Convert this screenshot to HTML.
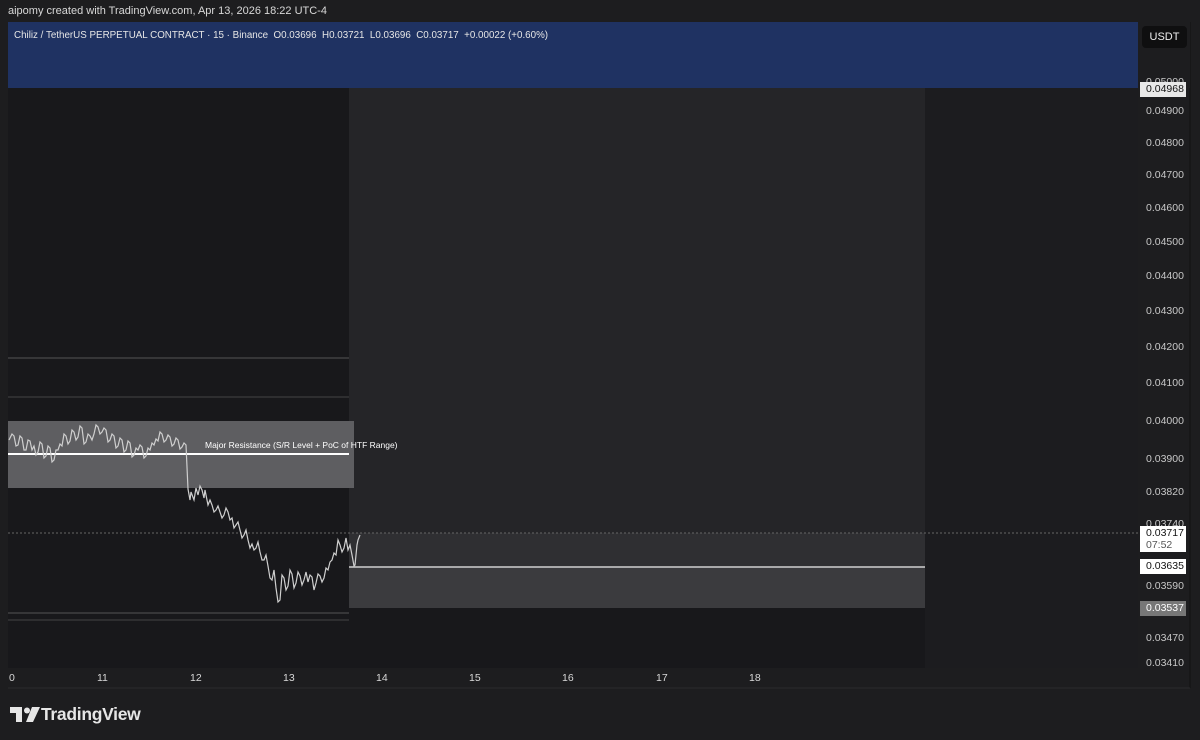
<!DOCTYPE html>
<html><head><meta charset="utf-8"><style>
body{margin:0;width:1200px;height:740px;background:#1d1d1f;overflow:hidden;font-family:"Liberation Sans",sans-serif;position:relative}
.t{position:absolute;color:#d8d8d8;font-size:11px;white-space:nowrap}
.p{position:absolute;left:1146px;color:#c8c8c8;font-size:10.5px}
.lab{position:absolute;left:1140px;width:46px;background:#fff;color:#111;font-size:10.5px;padding-left:6px;box-sizing:border-box}
</style></head><body>
<div class="t" style="left:8px;top:5px;font-size:11px">aipomy created with TradingView.com, Apr 13, 2026 18:22 UTC-4</div>
<svg style="position:absolute;left:0;top:0" width="1200" height="740">
<rect x="8" y="22" width="1130" height="646" fill="#18181b"/>
<rect x="925" y="88" width="213" height="580" fill="#1c1c1f"/>
<rect x="349" y="88" width="576" height="520" fill="#252528"/>
<rect x="349" y="533" width="576" height="34" fill="#2f2f32"/>
<rect x="349" y="567" width="576" height="41" fill="#3b3b3e"/>
<line x1="349" y1="567" x2="925" y2="567" stroke="#d0d0d0" stroke-width="1.5"/>
<rect x="8" y="421" width="346" height="67" fill="#5e5e61"/>
<line x1="8" y1="454" x2="349" y2="454" stroke="#fff" stroke-width="2"/>
<line x1="8" y1="358" x2="349" y2="358" stroke="#555" stroke-width="1"/>
<line x1="8" y1="397" x2="349" y2="397" stroke="#444" stroke-width="1"/>
<line x1="8" y1="613" x2="349" y2="613" stroke="#555" stroke-width="1"/>
<line x1="8" y1="620" x2="349" y2="620" stroke="#444" stroke-width="1"/>
<line x1="8" y1="533" x2="1138" y2="533" stroke="#666" stroke-dasharray="2 2" stroke-width="1"/>
<polyline fill="none" stroke="#cfcfcf" stroke-width="1.2" points="9,440 12,434 14,436 16,446 18,445 20,436 22,438 24,450 26,450 28,440 30,441 32,450 34,446 36,455 38,452 40,442 42,444 44,458 46,456 48,446 50,448 52,462 54,460 56,450 58,450 60,444 62,446 64,434 66,436 68,444 70,441 72,430 74,432 76,440 78,437 80,426 82,428 84,444 86,442 88,434 90,436 92,440 94,434 96,425 98,427 100,434 102,432 104,428 106,430 108,442 110,440 112,434 114,436 116,448 118,446 120,438 122,440 124,452 126,450 128,441 130,443 132,457 134,455 136,448 138,450 140,445 142,447 144,458 146,456 148,448 150,450 152,443 154,445 156,439 158,441 160,432 162,434 164,442 166,440 168,435 170,437 172,446 174,444 176,438 178,440 180,449 182,447 184,443 186,445 188,489 190,500 191,492 194,500 196,488 198,495 200,486 202,490 204,498 205,490 208,505 210,500 212,505 214,512 216,510 218,506 220,512 222,518 224,515 226,508 228,512 230,520 232,518 234,528 236,525 238,522 240,530 242,538 244,535 246,530 248,540 250,548 252,544 254,550 256,548 258,542 260,552 262,560 264,560 266,555 268,566 270,578 272,580 274,570 276,588 278,602 280,600 282,575 284,578 286,590 288,586 290,570 292,574 294,588 296,583 298,572 300,576 302,585 304,580 306,572 308,582 310,575 312,577 314,590 316,583 318,574 320,576 322,582 324,578 326,568 328,570 330,562 332,560 334,553 336,555 338,540 340,545 342,552 344,548 346,538 348,550 350,545 352,555 354,566 355,565 357,545 358,540 360,535"/>
<line x1="1190" y1="22" x2="1190" y2="688" stroke="#111" stroke-width="1"/>
<line x1="8" y1="688" x2="1190" y2="688" stroke="#2a2a2c" stroke-width="1"/>
</svg>
<div style="position:absolute;left:8px;top:22px;width:1130px;height:66px;background:#1f3262"></div>
<div style="position:absolute;left:1138px;top:22px;width:52px;height:66px;background:#1d1d1f"></div>
<div class="t" style="left:14px;top:30px;font-size:9.8px;color:#e6e6e6">Chiliz / TetherUS PERPETUAL CONTRACT · 15 · Binance&nbsp; O0.03696&nbsp; H0.03721&nbsp; L0.03696&nbsp; C0.03717&nbsp; +0.00022 (+0.60%)</div>
<div class="t" style="left:205px;top:440px;font-size:8.5px;color:#fff">Major Resistance (S/R Level + PoC of HTF Range)</div>
<div style="position:absolute;left:1142px;top:26px;width:45px;height:22px;background:#0f0f10;border-radius:4px;color:#eee;font-size:11px;line-height:22px;text-align:center">USDT</div>
<div class="p" style="top:76px">0.05000</div>
<div class="lab" style="top:82px;height:15px;line-height:15px;background:#e8e8e8">0.04968</div>
<div class="p" style="top:105px">0.04900</div>
<div class="p" style="top:137px">0.04800</div>
<div class="p" style="top:169px">0.04700</div>
<div class="p" style="top:202px">0.04600</div>
<div class="p" style="top:236px">0.04500</div>
<div class="p" style="top:270px">0.04400</div>
<div class="p" style="top:305px">0.04300</div>
<div class="p" style="top:341px">0.04200</div>
<div class="p" style="top:377px">0.04100</div>
<div class="p" style="top:415px">0.04000</div>
<div class="p" style="top:453px">0.03900</div>
<div class="p" style="top:486px">0.03820</div>
<div class="p" style="top:518px">0.03740</div>
<div class="lab" style="top:526px;height:26px;line-height:12px;padding-top:1px">0.03717<br><span style="color:#555">07:52</span></div>
<div class="lab" style="top:559px;height:15px;line-height:15px">0.03635</div>
<div class="p" style="top:580px">0.03590</div>
<div class="lab" style="top:601px;height:15px;line-height:15px;background:#777;color:#fff">0.03537</div>
<div class="p" style="top:632px">0.03470</div>
<div class="p" style="top:657px">0.03410</div>
<div class="t" style="left:9px;top:672px;font-size:10.5px">0</div>
<div class="t" style="left:97px;top:672px;font-size:10.5px">11</div>
<div class="t" style="left:190px;top:672px;font-size:10.5px">12</div>
<div class="t" style="left:283px;top:672px;font-size:10.5px">13</div>
<div class="t" style="left:376px;top:672px;font-size:10.5px">14</div>
<div class="t" style="left:469px;top:672px;font-size:10.5px">15</div>
<div class="t" style="left:562px;top:672px;font-size:10.5px">16</div>
<div class="t" style="left:656px;top:672px;font-size:10.5px">17</div>
<div class="t" style="left:749px;top:672px;font-size:10.5px">18</div>
<svg style="position:absolute;left:10px;top:707px" width="30" height="16"><path d="M0 0H12V15H6V6H0Z" fill="#e6e6e6"/><circle cx="17" cy="3.5" r="3" fill="#e6e6e6"/><path d="M22 0H30L23 15H16Z" fill="#e6e6e6"/></svg>
<div class="t" style="left:41px;top:704px;font-size:17.5px;font-weight:bold;color:#e6e6e6;letter-spacing:-0.3px">TradingView</div>
</body></html>
